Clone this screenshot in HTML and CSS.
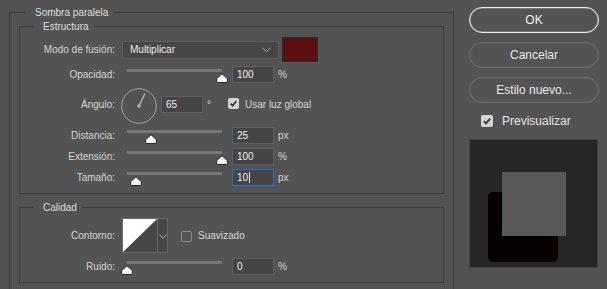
FILE: index.html
```html
<!DOCTYPE html>
<html lang="es">
<head>
<meta charset="utf-8">
<title>Sombra paralela</title>
<link rel="stylesheet" href="styles.css">
</head>
<body>
<div class="dialog">
  <fieldset class="group outer">
    <legend class="legend-outer">Sombra paralela</legend>

    <fieldset class="group inner structure">
      <legend class="legend-inner">Estructura</legend>

      <div class="row row-mode">
        <span class="lbl">Modo de fusión:</span>
        <div class="select">
          <span class="select-text">Multiplicar</span>
          <svg class="chev" width="9" height="6" viewBox="0 0 9 6"><polyline points="0.5,0.8 4.5,4.8 8.5,0.8" fill="none" stroke="#b5b5b5" stroke-width="1"/></svg>
        </div>
        <div class="swatch"></div>
      </div>

      <div class="row row-opacity">
        <span class="lbl">Opacidad:</span>
        <div class="slider">
          <div class="track"></div>
          <svg class="thumb" style="--v:1" width="12" height="10" viewBox="0 0 12 10"><path d="M6 0.7 L11.3 5.6 L11.3 8.6 Q11.3 9.4 10.5 9.4 L1.5 9.4 Q0.7 9.4 0.7 8.6 L0.7 5.6 Z" fill="#ffffff" stroke="#1e1e1e" stroke-width="1" stroke-linejoin="round"/></svg>
        </div>
        <div class="num">100</div>
        <span class="unit">%</span>
      </div>

      <div class="row row-angle">
        <span class="lbl lbl-angle">Ángulo:</span>
        <svg class="dial" width="36" height="36" viewBox="0 0 36 36">
          <circle cx="18" cy="18" r="17.3" fill="none" stroke="#a6a6a6" stroke-width="1"/>
          <line x1="18" y1="18" x2="23.9" y2="5.4" stroke="#c4c4c4" stroke-width="1.2"/>
          <circle cx="18" cy="18" r="1.8" fill="#b8b8b8"/>
        </svg>
        <div class="angle-fields">
          <div class="num">65</div>
          <span class="deg">°</span>
          <span class="check checked"><svg width="11" height="11" viewBox="0 0 11 11"><path d="M2.6 5.6 L4.6 7.6 L8.4 3.2" fill="none" stroke="#3a3a3a" stroke-width="1.8"/></svg></span>
          <span class="check-text">Usar luz global</span>
        </div>
      </div>

      <div class="row row-dist">
        <span class="lbl">Distancia:</span>
        <div class="slider">
          <div class="track"></div>
          <svg class="thumb" style="--v:0.25" width="12" height="10" viewBox="0 0 12 10"><path d="M6 0.7 L11.3 5.6 L11.3 8.6 Q11.3 9.4 10.5 9.4 L1.5 9.4 Q0.7 9.4 0.7 8.6 L0.7 5.6 Z" fill="#ffffff" stroke="#1e1e1e" stroke-width="1" stroke-linejoin="round"/></svg>
        </div>
        <div class="num">25</div>
        <span class="unit">px</span>
      </div>

      <div class="row row-next">
        <span class="lbl">Extensión:</span>
        <div class="slider">
          <div class="track"></div>
          <svg class="thumb" style="--v:1" width="12" height="10" viewBox="0 0 12 10"><path d="M6 0.7 L11.3 5.6 L11.3 8.6 Q11.3 9.4 10.5 9.4 L1.5 9.4 Q0.7 9.4 0.7 8.6 L0.7 5.6 Z" fill="#ffffff" stroke="#1e1e1e" stroke-width="1" stroke-linejoin="round"/></svg>
        </div>
        <div class="num">100</div>
        <span class="unit">%</span>
      </div>

      <div class="row row-next">
        <span class="lbl">Tamaño:</span>
        <div class="slider">
          <div class="track"></div>
          <svg class="thumb" style="--v:0.09" width="12" height="10" viewBox="0 0 12 10"><path d="M6 0.7 L11.3 5.6 L11.3 8.6 Q11.3 9.4 10.5 9.4 L1.5 9.4 Q0.7 9.4 0.7 8.6 L0.7 5.6 Z" fill="#ffffff" stroke="#1e1e1e" stroke-width="1" stroke-linejoin="round"/></svg>
        </div>
        <div class="num focus">10<span class="caret"></span></div>
        <span class="unit">px</span>
      </div>
    </fieldset>

    <fieldset class="group inner quality">
      <legend class="legend-inner">Calidad</legend>

      <div class="row row-contour">
        <span class="lbl">Contorno:</span>
        <div class="contour">
          <svg class="curve" width="34" height="33" viewBox="0 0 34 33">
            <rect x="0" y="0" width="34" height="33" fill="#474747"/>
            <polygon points="0,0 34,0 0,33" fill="#ffffff"/>
          </svg>
          <div class="cdrop">
            <svg width="8" height="5" viewBox="0 0 8 5"><polyline points="0.5,0.7 4,4.2 7.5,0.7" fill="none" stroke="#aaaaaa" stroke-width="1"/></svg>
          </div>
        </div>
        <span class="check"></span>
        <span class="check-text">Suavizado</span>
      </div>

      <div class="row row-noise">
        <span class="lbl">Ruido:</span>
        <div class="slider">
          <div class="track"></div>
          <svg class="thumb" style="--v:0" width="12" height="10" viewBox="0 0 12 10"><path d="M6 0.7 L11.3 5.6 L11.3 8.6 Q11.3 9.4 10.5 9.4 L1.5 9.4 Q0.7 9.4 0.7 8.6 L0.7 5.6 Z" fill="#ffffff" stroke="#1e1e1e" stroke-width="1" stroke-linejoin="round"/></svg>
        </div>
        <div class="num">0</div>
        <span class="unit">%</span>
      </div>
    </fieldset>
  </fieldset>

  <div class="side">
    <div class="btn primary">OK</div>
    <div class="btn">Cancelar</div>
    <div class="btn">Estilo nuevo...</div>
    <div class="preview-row">
      <span class="check checked big"><svg width="12" height="12" viewBox="0 0 12 12"><path d="M2.8 6.1 L5 8.3 L9.2 3.6" fill="none" stroke="#3a3a3a" stroke-width="1.9"/></svg></span>
      <span class="preview-text">Previsualizar</span>
    </div>
    <div class="preview">
      <div class="pv-shadow"></div>
      <div class="pv-square"></div>
    </div>
  </div>
</div>
</body>
</html>
```

FILE: styles.css
```css
html, body {
  margin: 0;
  padding: 0;
}

body {
  background: #535353;
  font-family: "Liberation Sans", Arial, sans-serif;
  font-size: 10px;
  color: #d6d6d6;
  height: 289px;
  overflow: hidden;
}

.dialog {
  display: flex;
  align-items: flex-start;
}

fieldset.group {
  border: 1px solid #3c3c3c;
  min-width: 0;
}

fieldset.group legend {
  font-size: 10px;
  line-height: 13px;
  color: #dedede;
}

fieldset.outer {
  margin: 6px 0 0 9px;
  width: 445px;
  box-sizing: border-box;
  padding: 1px 9px 40px;
}

.legend-outer {
  margin-left: 6px;
  padding: 0 6px 0 10px;
}

.legend-inner {
  margin-left: 13px;
  padding: 0 5px 0 10px;
}

fieldset.inner {
  margin: 0;
  padding: 4px 0 7px 0;
}

fieldset.quality {
  margin-top: 7px;
}

.row {
  display: flex;
  align-items: center;
}

.lbl {
  flex: none;
  width: 95px;
  margin-right: 7px;
  text-align: right;
  white-space: nowrap;
}

.row-mode {
  height: 25px;
}

.row-opacity {
  margin-top: 4px;
  height: 17px;
}

.row-angle {
  margin-top: 5px;
  height: 36px;
  align-items: flex-start;
}

.row-dist {
  margin-top: 3px;
  height: 17px;
}

.row-next {
  margin-top: 4px;
  height: 17px;
}

.row-contour {
  height: 35px;
}

.row-noise {
  margin-top: 5px;
  height: 17px;
}

/* select */
.select {
  width: 157px;
  height: 18px;
  box-sizing: border-box;
  border: 1px solid #5e5e5e;
  border-radius: 3px;
  background: #474747;
  display: flex;
  align-items: center;
  justify-content: space-between;
  padding: 0 7px 0 7px;
  color: #ececec;
}

.chev {
  display: block;
  margin-top: 1px;
}

.swatch {
  width: 36px;
  height: 25px;
  box-sizing: border-box;
  margin-left: 3px;
  border: 1px solid #2e2e2e;
  background: #5c0f0f;
}

/* sliders */
.slider {
  position: relative;
  flex: none;
  width: 105px;
  height: 17px;
  margin-right: 5px;
}

.track {
  position: absolute;
  left: 5px;
  top: 3px;
  width: 95px;
  height: 3px;
  background: #777777;
}

.thumb {
  position: absolute;
  top: 7px;
  left: calc(5px + var(--v) * 95px - 6px);
  display: block;
}

/* number fields */
.num {
  flex: none;
  width: 42px;
  height: 17px;
  box-sizing: border-box;
  border: 1px solid #5f5f5f;
  background: #454545;
  padding-left: 4px;
  line-height: 15px;
  color: #eeeeee;
  display: flex;
  align-items: center;
}

.num.focus {
  border-color: #2b6cd0;
}

.caret {
  display: inline-block;
  width: 1px;
  height: 11px;
  margin-left: 1px;
  background: #e6e6e6;
}

.unit {
  margin-left: 4px;
}

/* angle */
.lbl-angle {
  margin-top: 8px;
  line-height: 17px;
}

.dial {
  display: block;
  flex: none;
  margin-left: -1px;
  margin-right: 4px;
}

.angle-fields {
  display: flex;
  align-items: center;
  height: 17px;
  margin-top: 8px;
}

.deg {
  margin-left: 4px;
  color: #cfcfcf;
}

.check {
  flex: none;
  width: 11px;
  height: 11px;
  box-sizing: border-box;
  border: 1px solid #8a8a8a;
  border-radius: 2px;
  display: flex;
  align-items: center;
  justify-content: center;
}

.check.checked {
  border: none;
  background: #d4d4d4;
}

.check svg {
  display: block;
}

.angle-fields .check {
  margin-left: 17px;
  margin-top: -3px;
}

.check-text {
  margin-left: 6px;
  white-space: nowrap;
}

/* contour */
.contour {
  flex: none;
  display: flex;
  width: 46px;
  height: 35px;
  box-sizing: border-box;
  border: 1px solid #6a6a6a;
}

.curve {
  display: block;
}

.cdrop {
  flex: 1;
  border-left: 1px solid #6a6a6a;
  background: #474747;
  display: flex;
  align-items: center;
  justify-content: center;
  padding-top: 2px;
}

.row-contour .check {
  margin-left: 13px;
  margin-top: 1px;
}

/* right column */
.side {
  flex: none;
  width: 130px;
  margin-left: 15px;
  padding-top: 7px;
  display: flex;
  flex-direction: column;
}

.btn {
  height: 26px;
  box-sizing: border-box;
  border-radius: 13px;
  border: 1px solid #6c6c6c;
  box-shadow: inset 0 0 0 0.6px rgba(110, 110, 110, 0.5);
  display: flex;
  align-items: center;
  justify-content: center;
  font-size: 12px;
  color: #e8e8e8;
  margin-bottom: 9px;
}

.btn.primary {
  border-color: #ececec;
  box-shadow: inset 0 0 0 0.6px rgba(236, 236, 236, 0.5);
  color: #f2f2f2;
}

.preview-row {
  display: flex;
  align-items: center;
  height: 14px;
  margin-top: 2px;
  padding-left: 12px;
}

.check.big {
  width: 12px;
  height: 12px;
}

.preview-text {
  margin-left: 9px;
  font-size: 12px;
  color: #e4e4e4;
}

.preview {
  position: relative;
  margin-top: 11px;
  width: 129px;
  height: 129px;
  box-sizing: border-box;
  border: 1px solid #444444;
  background: #262626;
}

.pv-shadow {
  position: absolute;
  left: 18px;
  top: 52px;
  width: 70px;
  height: 70px;
  border-radius: 5px;
  background: #060000;
}

.pv-square {
  position: absolute;
  left: 32px;
  top: 32px;
  width: 64px;
  height: 64px;
  background: #585858;
}
```
